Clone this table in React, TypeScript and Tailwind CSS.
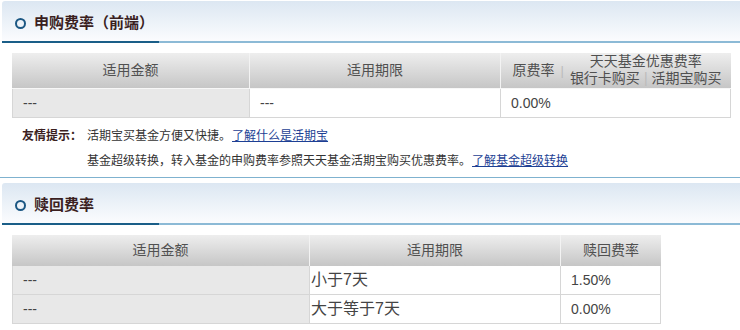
const font = { fontFamily: '"Liberation Sans", "Noto Sans CJK SC", sans-serif' }

function SectionTitle({ title }: { title: string }) {
	return (
		<div className="ml-[2px] h-[42px] rounded-tl-[3px] bg-gradient-to-b from-[#dce7f2] to-[#fbfcfe] relative border-b-2 border-[#8cbad6]">
			<div className="flex items-center h-[40px] pl-[13px] pt-[4px]">
				<span className="w-[11px] h-[11px] rounded-full border-[2.5px] border-[#1b5783]" />
				<span className="ml-[8px] text-[15px] font-bold text-[#3b1f1f] leading-[20px]">
					{title}
				</span>
			</div>
			<div className="absolute left-0 bottom-[-2px] w-[157px] h-[2px] bg-[#1a5e88]" />
		</div>
	)
}

const headCell =
	'flex items-center justify-center text-[14px] text-[#505050] border-l border-[#f3f3f3] first:border-l-0'

export default function App() {
	return (
		<div className="w-[740px] h-[330px] bg-white overflow-hidden pt-[1px]" style={font}>
			<SectionTitle title="申购费率（前端）" />

			<div className="ml-[12px] mt-[10px] w-[719px]">
				<div className="grid grid-cols-[237px_251px_231px] h-[35px] bg-gradient-to-b from-[#eeeeee] to-[#c6c6c6]">
					<div className={headCell}>适用金额</div>
					<div className={headCell}>适用期限</div>
					<div className={headCell}>
						<span className="text-[14px] ml-[2px]">原费率</span>
						<span className="mx-[6px] text-[#bbb] text-[13px]">|</span>
						<div className="flex flex-col items-center text-[14px] leading-[17px] mt-[-1px]">
							<span>天天基金优惠费率</span>
							<span>
								银行卡购买<span className="mx-[4px] text-[#bbb]">|</span>活期宝购买
							</span>
						</div>
					</div>
				</div>
				<div className="grid grid-cols-[237px_251px_231px] h-[30px] border-t border-[#f7f7f7] text-[14px] text-[#444]">
					<div className="bg-[#e8e8e8] border-l border-b border-[#d6d6d6] flex items-center pl-[10px]">---</div>
					<div className="border-l border-b border-[#d6d6d6] flex items-center pl-[10px]">---</div>
					<div className="border-l border-r border-b border-[#d6d6d6] flex items-center pl-[10px]">0.00%</div>
				</div>
			</div>

			<div className="pl-[22px] pt-[5px] text-[12px] text-[#333]">
				<div className="flex items-center h-[25px]">
					<span className="w-[65px] font-bold text-[#3b1f1f]">友情提示：</span>
					<span>活期宝买基金方便又快捷。</span>
					<a href="#" className="ml-[1px] text-[#1d3f94] underline">了解什么是活期宝</a>
				</div>
				<div className="flex items-center h-[25px] pl-[65px]">
					<span>基金超级转换，转入基金的申购费率参照天天基金活期宝购买优惠费率。</span>
					<a href="#" className="ml-[1px] text-[#1d3f94] underline">了解基金超级转换</a>
				</div>
			</div>

			<div className="mt-[4px] h-px bg-[#7fb2cf]" />

			<div className="mt-[5px]">
				<SectionTitle title="赎回费率" />
			</div>

			<div className="ml-[12px] mt-[10px] w-[649px]">
				<div className="grid grid-cols-[297px_251px_101px] h-[31px] bg-gradient-to-b from-[#eeeeee] to-[#c6c6c6]">
					<div className={headCell}>适用金额</div>
					<div className={headCell}>适用期限</div>
					<div className={headCell}>赎回费率</div>
				</div>
				{[
					['小于7天', '1.50%'],
					['大于等于7天', '0.00%'],
				].map(([term, rate]) => (
					<div
						key={term}
						className="grid grid-cols-[297px_251px_101px] h-[29px] text-[14px] text-[#444]"
					>
						<div className="bg-[#e8e8e8] border-l border-b border-[#d6d6d6] flex items-center pl-[10px]">---</div>
						<div className="border-l border-b border-[#d6d6d6] flex items-center pl-[1px] text-[16px]">{term}</div>
						<div className="border-l border-r border-b border-[#d6d6d6] flex items-center pl-[10px]">{rate}</div>
					</div>
				))}
			</div>
		</div>
	)
}
